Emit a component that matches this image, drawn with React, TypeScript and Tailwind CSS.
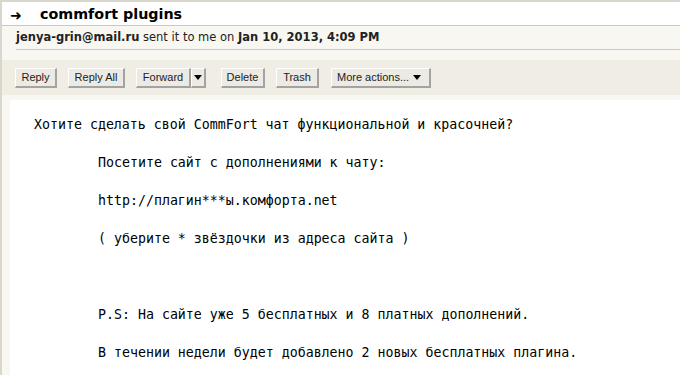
const body = [
  { text: "Хотите сделать свой CommFort чат функциональной и красочней?", indent: false },
  { text: "", indent: false },
  { text: "Посетите сайт с дополнениями к чату:", indent: true },
  { text: "", indent: false },
  { text: "http://плагин***ы.комфорта.net", indent: true },
  { text: "", indent: false },
  { text: "( уберите * звёздочки из адреса сайта )", indent: true },
  { text: "", indent: false },
  { text: "", indent: false },
  { text: "", indent: false },
  { text: "P.S: На сайте уже 5 бесплатных и 8 платных дополнений.", indent: true },
  { text: "", indent: false },
  { text: "В течении недели будет добавлено 2 новых бесплатных плагина.", indent: true },
];

const bevel =
  "border-t border-l border-t-white border-l-white border-r-2 border-b-2 border-r-[#a3a3a3] border-b-[#a3a3a3] bg-[#eceae3]";

function Btn({ label, className = "" }: { label: string; className?: string }) {
  return (
    <div className={`flex h-[20px] items-center justify-center whitespace-nowrap text-[11px] text-[#222] ${bevel} ${className}`}>
      {label}
    </div>
  );
}

function Caret() {
  return (
    <svg width="8" height="5" viewBox="0 0 8 5" className="shrink-0">
      <path d="M0 0h8L4 5z" fill="#000" />
    </svg>
  );
}

export default function App() {
  return (
    <div className="h-[375px] w-[680px] overflow-hidden bg-white font-['Liberation_Sans',Arial,sans-serif]">
      <div className="flex h-full flex-col border-l-2 border-t-2 border-[#d9d6cc]">
        {/* subject */}
        <div className="flex h-[24px] shrink-0 items-center border-b border-[#c8c8c8] bg-white pt-[2px]">
          <span className="ml-[8px] w-[30px] font-['DejaVu_Sans',sans-serif] text-[14px] leading-none text-black">➜</span>
          <span className="font-['DejaVu_Sans',Verdana,sans-serif] text-[14.3px] font-bold leading-none text-black">
            commfort plugins
          </span>
        </div>

        {/* sender */}
        <div className="shrink-0 bg-[#f8f7f2] pl-[14px]">
          <div className="flex h-[24px] items-center border-b border-[#c8c8c8] font-['DejaVu_Sans',Verdana,sans-serif] text-[11.5px] text-[#222]">
            <b>jenya-grin@mail.ru</b>
            <span className="whitespace-pre"> sent it to me on </span>
            <b>Jan 10, 2013, 4:09 PM</b>
          </div>
        </div>

        {/* toolbar */}
        <div className="shrink-0 bg-[#f8f7f2] pt-[10px] pb-[5px]">
          <div className="flex h-[35px] items-center gap-[11px] bg-[#f0ede5] pl-[13px]">
            <Btn label="Reply" className="w-[42px]" />
            <Btn label="Reply All" className="w-[57px]" />
            <div className="flex">
              <Btn label="Forward" className="w-[55px]" />
              <div className={`flex h-[20px] w-[15px] items-center justify-center ${bevel}`}>
                <Caret />
              </div>
            </div>
            <Btn label="Delete" className="ml-[4px] w-[44px]" />
            <Btn label="Trash" className="w-[43px]" />
            <div className={`ml-[1px] flex h-[20px] w-[100px] items-center justify-between whitespace-nowrap pl-[5px] pr-[8px] text-[11px] text-[#222] ${bevel}`}>
              <span>More actions...</span>
              <Caret />
            </div>
          </div>
        </div>

        {/* message body */}
        <div className="flex flex-1 bg-[#f8f7f2] pl-[8px]">
          <div className="flex-1 bg-white pl-[24px] pt-[15px] font-['DejaVu_Sans_Mono','Lucida_Console',monospace] text-[13.28px] leading-[19px] text-black">
            {body.map((line, i) => (
              <div key={i} className={`h-[19px] whitespace-pre ${line.indent ? "pl-[64px]" : ""}`}>
                {line.text}
              </div>
            ))}
          </div>
        </div>
      </div>
    </div>
  );
}
